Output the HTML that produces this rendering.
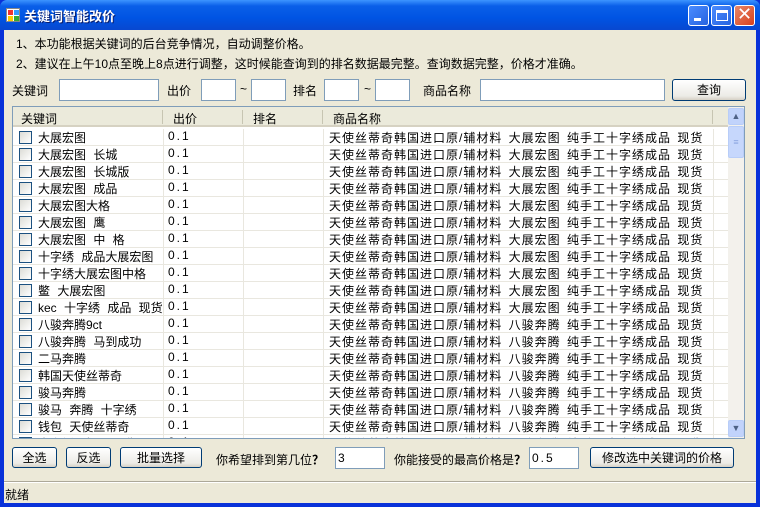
<!DOCTYPE html>
<html><head><meta charset="utf-8"><style>
*{margin:0;padding:0;box-sizing:border-box}
body{width:760px;height:507px;overflow:hidden;background:#0831d9;font-family:"Liberation Sans","Noto Sans CJK SC",sans-serif;font-size:12px;color:#000;position:relative}
.a{position:absolute}
#title{left:0;top:0;width:760px;height:30px;background:linear-gradient(#3d95ff,#0a5fe8 20%,#0054e3 60%,#0848d0);border-radius:7px 7px 0 0}
#tt{left:24px;top:6px;color:#fff;font-weight:bold;font-size:13px;text-shadow:1px 1px #0a1e6e}
.tb{top:5px;width:21px;height:21px;border:1px solid #fff;border-radius:3px;background:linear-gradient(135deg,#4a8cff,#2663e0)}
#client{left:4px;top:30px;width:752px;height:473px;background:#ece9d8}
.t{position:absolute;white-space:nowrap}
.in{position:absolute;background:#fff;border:1px solid #7f9db9;height:22px}
.btn{position:absolute;border:1px solid #003c74;border-radius:3px;background:linear-gradient(#fff,#ecebe6 80%,#d6d0c5);text-align:center;line-height:20px;font-size:12px}
#list{left:12px;top:106px;width:733px;height:333px;border:1px solid #7f9db9;background:#fff;overflow:hidden}
.hd{position:absolute;top:0;height:20px;background:#ebeadb;border-bottom:2px solid #d6d2c2;width:716px;left:0}
.row{position:absolute;left:0;width:716px;height:17px;border-bottom:1px solid #e9e7df}
.cb{position:absolute;left:6px;top:2px;width:13px;height:13px;border:1px solid #1c5180;background:linear-gradient(135deg,#dcdcd6,#fff)}
.vl{position:absolute;top:0;width:1px;background:#e9e7df;height:333px}
.nm{letter-spacing:1px;word-spacing:2px}
.kw{word-spacing:4px}
</style></head><body>
<div id="title" class="a"></div>
<div class="a" style="left:6px;top:8px;width:14px;height:14px;background:#fff;border:1px solid #888"><div class="a" style="left:1px;top:1px;width:5px;height:5px;background:#e33"></div><div class="a" style="left:7px;top:1px;width:5px;height:5px;background:#39f"></div><div class="a" style="left:1px;top:7px;width:5px;height:5px;background:#fc0"></div><div class="a" style="left:7px;top:7px;width:5px;height:5px;background:#3a3"></div></div>
<div id="tt" class="a">关键词智能改价</div>
<div class="a tb" style="left:688px"><div class="a" style="left:5px;top:12px;width:7px;height:3px;background:#fff"></div></div>
<div class="a tb" style="left:711px"><div class="a" style="left:4px;top:4px;width:12px;height:11px;border:1px solid #fff;border-top:3px solid #fff"></div></div>
<div class="a tb" style="left:734px;background:linear-gradient(135deg,#e8876a,#d7411b)"><div class="a" style="left:2px;top:-2px;color:#fff;font-size:18px;font-weight:bold;font-family:'DejaVu Sans'">✕</div></div>
<div id="client" class="a">
<div class="t" style="left:12px;top:5px">1、本功能根据关键词的后台竞争情况，自动调整价格。</div>
<div class="t" style="left:12px;top:25px">2、建议在上午10点至晚上8点进行调整，这时候能查询到的排名数据最完整。查询数据完整，价格才准确。</div>
<div class="t" style="left:8px;top:52px">关键词</div>
<div class="in" style="left:55px;top:49px;width:100px"></div>
<div class="t" style="left:163px;top:52px">出价</div>
<div class="in" style="left:197px;top:49px;width:35px"></div>
<div class="t" style="left:236px;top:52px">~</div>
<div class="in" style="left:247px;top:49px;width:35px"></div>
<div class="t" style="left:289px;top:52px">排名</div>
<div class="in" style="left:320px;top:49px;width:35px"></div>
<div class="t" style="left:360px;top:52px">~</div>
<div class="in" style="left:371px;top:49px;width:35px"></div>
<div class="t" style="left:419px;top:52px">商品名称</div>
<div class="in" style="left:476px;top:49px;width:185px"></div>
<div class="btn" style="left:668px;top:49px;width:74px;height:22px">查询</div>
</div>
<div id="list" class="a">
<div class="hd"><span class="t" style="left:8px;top:3px">关键词</span><span class="t" style="left:160px;top:3px">出价</span><span class="t" style="left:240px;top:3px">排名</span><span class="t" style="left:320px;top:3px">商品名称</span>
<div class="a" style="left:149px;top:3px;width:1px;height:14px;background:#c7c5b2"></div><div class="a" style="left:229px;top:3px;width:1px;height:14px;background:#c7c5b2"></div><div class="a" style="left:309px;top:3px;width:1px;height:14px;background:#c7c5b2"></div><div class="a" style="left:699px;top:3px;width:1px;height:14px;background:#c7c5b2"></div></div>
<div id="rows"></div>
<div class="vl" style="left:150px;top:22px"></div><div class="vl" style="left:230px;top:22px"></div><div class="vl" style="left:310px;top:22px"></div><div class="vl" style="left:700px;top:22px"></div>
<div class="a" style="left:715px;top:0;width:17px;height:331px;background:#f3f1ec"></div>
<div class="a" style="left:715px;top:1px;width:16px;height:17px;border:1px solid #b8cdf8;border-radius:2px;background:#c1d3fb;color:#4d6185;font-size:9px;text-align:center;line-height:15px">▲</div>
<div class="a" style="left:715px;top:19px;width:16px;height:32px;border:1px solid #b8cdf8;border-radius:2px;background:#c6d7fc;color:#8aa5e0;font-size:9px;text-align:center;line-height:30px">≡</div>
<div class="a" style="left:715px;top:313px;width:16px;height:17px;border:1px solid #b8cdf8;border-radius:2px;background:#c1d3fb;color:#4d6185;font-size:9px;text-align:center;line-height:15px">▼</div>
</div>
<div class="btn a" style="left:12px;top:447px;width:45px;height:21px">全选</div>
<div class="btn a" style="left:66px;top:447px;width:45px;height:21px">反选</div>
<div class="btn a" style="left:120px;top:447px;width:82px;height:21px">批量选择</div>
<div class="t" style="left:216px;top:451px">你希望排到第几位<b>？</b></div>
<div class="in" style="left:335px;top:447px;width:50px;height:22px;padding:3px 2px">3</div>
<div class="t" style="left:394px;top:451px">你能接受的最高价格是<b>？</b></div>
<div class="in" style="left:529px;top:447px;width:50px;height:22px;padding:3px 2px;letter-spacing:2px">0.5</div>
<div class="btn a" style="left:590px;top:447px;width:144px;height:21px">修改选中关键词的价格</div>
<div class="a" style="left:4px;top:481px;width:752px;height:2px;border-top:1px solid #aca899;border-bottom:1px solid #fff"></div>
<div class="t" style="left:5px;top:486px">就绪</div>
<script>
var k=["大展宏图","大展宏图 长城","大展宏图 长城版","大展宏图 成品","大展宏图大格","大展宏图 鹰","大展宏图 中 格","十字绣 成品大展宏图","十字绣大展宏图中格","鳖 大展宏图","kec 十字绣 成品 现货","八骏奔腾9ct","八骏奔腾 马到成功","二马奔腾","韩国天使丝蒂奇","骏马奔腾","骏马 奔腾 十字绣","钱包 天使丝蒂奇","十字绣 成品 现货"];
var h="";
for(var i=0;i<k.length;i++){var n=i<11?"大展宏图":"八骏奔腾";
h+='<div class="row" style="top:'+(22+i*17)+'px"><div class="cb"></div><span class="t kw" style="left:25px;top:0px">'+k[i]+'</span><span class="t" style="left:155px;top:0px;letter-spacing:2px">0.1</span><span class="t nm" style="left:316px;top:0px">天使丝蒂奇韩国进口原/辅材料 '+n+' 纯手工十字绣成品 现货</span></div>';}
document.getElementById("rows").innerHTML=h;
</script>
</body></html>
